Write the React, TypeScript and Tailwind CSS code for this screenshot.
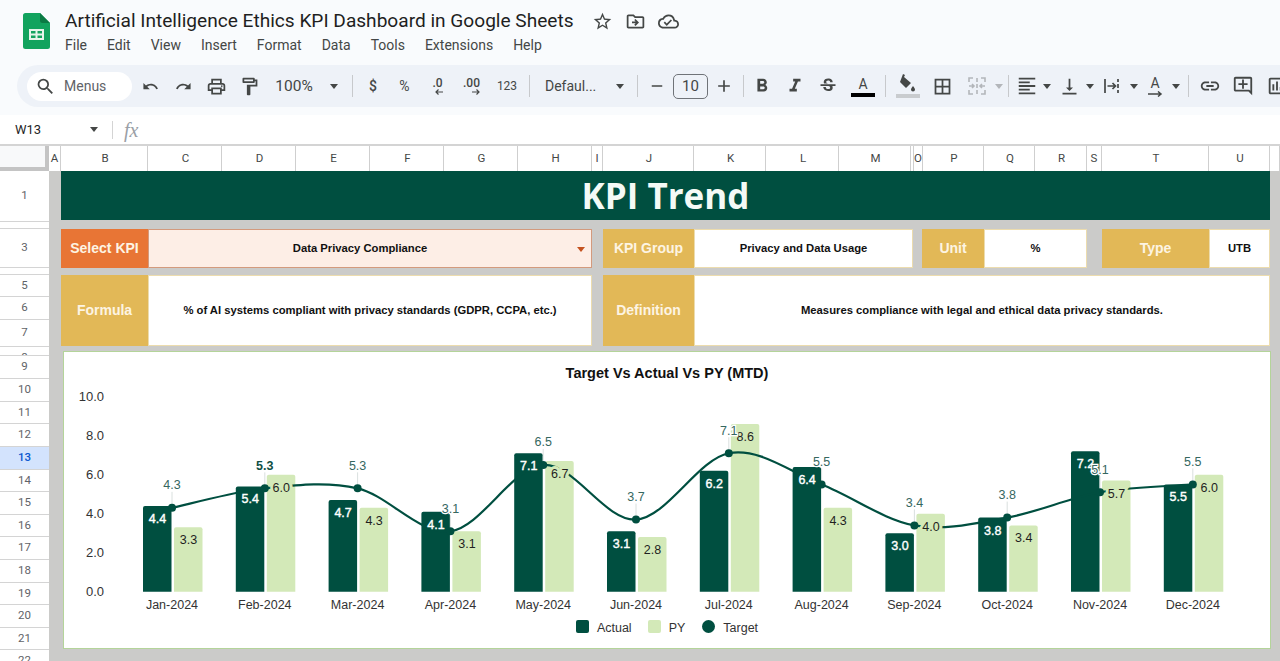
import {
  MdStarBorder,
  MdOutlineDriveFileMove,
  MdOutlineCloudDone,
  MdSearch,
  MdUndo,
  MdRedo,
  MdOutlinePrint,
  MdOutlineFormatPaint,
  MdFormatBold,
  MdFormatItalic,
  MdStrikethroughS,
  MdBorderAll,
  MdFormatAlignLeft,
  MdVerticalAlignBottom,
  MdLink,
  MdOutlineAddComment,
  MdOutlineInsertChart,
  MdAdd,
  MdRemove,
} from "react-icons/md";
import type { ReactNode } from "react";

const months = ["Jan", "Feb", "Mar", "Apr", "May", "Jun", "Jul", "Aug", "Sep", "Oct", "Nov", "Dec"];
const actual = [4.4, 5.4, 4.7, 4.1, 7.1, 3.1, 6.2, 6.4, 3.0, 3.8, 7.2, 5.5];
const py = [3.3, 6.0, 4.3, 3.1, 6.7, 2.8, 8.6, 4.3, 4.0, 3.4, 5.7, 6.0];
const target = [4.3, 5.3, 5.3, 3.1, 6.5, 3.7, 7.1, 5.5, 3.4, 3.8, 5.1, 5.5];

const columns: [string, number][] = [
  ["A", 12], ["B", 87], ["C", 74], ["D", 74], ["E", 74], ["F", 74], ["G", 74], ["H", 74], ["I", 11],
  ["J", 91], ["K", 72], ["L", 73], ["M", 72], ["", 3], ["O", 9], ["P", 61], ["Q", 51], ["R", 52],
  ["S", 15], ["T", 107], ["U", 61], ["", 10],
];

const rows: [string, number][] = [
  ["1", 51], ["2", 7], ["3", 39], ["4", 7], ["5", 22], ["6", 23], ["7", 27], ["8", 9], ["9", 23], ["10", 23],
  ["11", 22], ["12", 23], ["13", 23], ["14", 22], ["15", 23], ["16", 22], ["17", 23], ["18", 23], ["19", 22],
  ["20", 23], ["21", 22], ["22", 23],
];

const baseY = 591.7;
const unit = 19.5;
const xAt = (i: number) => 172 + i * 92.8;
const yAt = (v: number) => baseY - v * unit;

function smoothLine() {
  const pts = target.map((v, i) => ({ x: xAt(i), y: yAt(v) }));
  let d = `M${pts[0].x} ${pts[0].y}`;
  for (let i = 0; i < pts.length - 1; i++) {
    const p0 = pts[i - 1] ?? pts[i];
    const p1 = pts[i];
    const p2 = pts[i + 1];
    const p3 = pts[i + 2] ?? p2;
    const c1x = p1.x + (p2.x - p0.x) / 6;
    const c1y = p1.y + (p2.y - p0.y) / 6;
    const c2x = p2.x - (p3.x - p1.x) / 6;
    const c2y = p2.y - (p3.y - p1.y) / 6;
    d += ` C${c1x} ${c1y} ${c2x} ${c2y} ${p2.x} ${p2.y}`;
  }
  return d;
}

const Cell = ({ w, children }: { w: string; children: ReactNode }) => (
  <div className={`${w} flex h-full shrink-0 items-center justify-center text-[#444746]`}>{children}</div>
);

const Sep = ({ className = "mx-[6px]" }: { className?: string }) => (
  <div className={`${className} h-[22px] w-px shrink-0 bg-[#c7c9cc]`} />
);

const Caret = ({ color = "border-t-[#444746]" }: { color?: string }) => (
  <div className={`h-0 w-0 border-x-[4.5px] border-t-[5px] border-x-transparent ${color}`} />
);

const SheetsLogo = () => (
  <svg width="27" height="36" viewBox="0 0 27 36">
    <path d="M2.5 0H17l10 10v23.5a2.5 2.5 0 0 1-2.5 2.5h-22A2.5 2.5 0 0 1 0 33.5v-31A2.5 2.5 0 0 1 2.5 0z" fill="#12a35e" />
    <path d="M17 0l10 10h-7.5A2.5 2.5 0 0 1 17 7.5z" fill="#0b7a44" />
    <path d="M6 16h15v11H6zm2 2v2.5h4.500V18zm6.500 0v2.5H19V18zM8 22.5V25h4.500v-2.500zm6.500 0V25H19v-2.500z" fill="#e6f4ea" fillRule="evenodd" />
  </svg>
);

const Decimal = ({ text, dir }: { text: string; dir: "left" | "right" }) => (
  <div className="flex flex-col items-end">
    <span className="text-[12px] font-medium leading-[12px]">{text}</span>
    <svg width="8" height="6" viewBox="0 0 8 6" fill="none" stroke="#444746" strokeWidth="1.200">
      <path d={dir === "left" ? "M8 3H1M3.500.5L1 3l2.500 2.500" : "M0 3h7M4.500.5L7 3 4.500 5.500"} />
    </svg>
  </div>
);

const Toolbar = () => (
  <div className="ml-[17px] flex h-[42px] items-center rounded-l-[21px] bg-[#eef2f8] pl-[10px] text-[#444746]">
    <div className="flex h-[29px] w-[105px] shrink-0 items-center rounded-full bg-white pl-[8px]">
      <MdSearch size={21} className="text-[#444746]" />
      <span className="ml-[8px] text-[14px] text-[#5f6368]">Menus</span>
    </div>
    <div className="w-[2px] shrink-0" />
    <Cell w="w-[33px]"><MdUndo size={17} /></Cell>
    <Cell w="w-[33px]"><MdRedo size={17} /></Cell>
    <Cell w="w-[33px]"><MdOutlinePrint size={21} /></Cell>
    <Cell w="w-[33px]"><MdOutlineFormatPaint size={21} /></Cell>
    <Cell w="w-[56px]"><span className="pt-[2px] text-[15.5px]">100%</span></Cell>
    <Cell w="w-[24px]"><Caret /></Cell>
    <Sep className="ml-[6px] mr-[5px]" />
    <Cell w="w-[30px]"><span className="text-[14px] font-medium">$</span></Cell>
    <Cell w="w-[33px]"><span className="text-[14px]">%</span></Cell>
    <Cell w="w-[33px]"><Decimal text=".0" dir="left" /></Cell>
    <Cell w="w-[35px]"><Decimal text=".00" dir="right" /></Cell>
    <Cell w="w-[36px]"><span className="text-[12px]">123</span></Cell>
    <Sep className="ml-[4px] mr-[15px]" />
    <span className="w-[65px] shrink-0 text-[14px]">Defaul...</span>
    <Cell w="w-[20px]"><Caret /></Cell>
    <Sep className="ml-[7px] mr-[6px]" />
    <Cell w="w-[26px]"><MdRemove size={18} /></Cell>
    <div className="mx-[3px] flex h-[25px] w-[35px] shrink-0 items-center justify-center rounded-[5px] border border-[#6f7378] text-[15px]">10</div>
    <Cell w="w-[26px]"><MdAdd size={20} /></Cell>
    <Sep className="ml-[6px] mr-[1px]" />
    <Cell w="w-[33px]"><MdFormatBold size={22} /></Cell>
    <Cell w="w-[33px]"><MdFormatItalic size={22} /></Cell>
    <Cell w="w-[34px]"><MdStrikethroughS size={20} /></Cell>
    <Cell w="w-[36px]">
      <div className="flex flex-col items-center">
        <span className="text-[14px] leading-[17px]">A</span>
        <div className="h-[4px] w-[24px] bg-black" />
      </div>
    </Cell>
    <Sep className="ml-[4px] mr-[5px]" />
    <Cell w="w-[33px]">
      <div className="flex flex-col items-center">
        <svg width="20" height="20" viewBox="0 0 20 20">
          <path d="M5 0l2 1-1 2 7 6-5 5-6-6zM15 12c1.500 2 2 2.800 2 3.500a2 2 0 0 1-4 0c0-.7.500-1.500 2-3.500z" fill="#444746" />
        </svg>
        <div className="h-[4px] w-[24px] bg-[#c9cccf]" />
      </div>
    </Cell>
    <Cell w="w-[36px]"><MdBorderAll size={21} /></Cell>
    <Cell w="w-[34px]">
      <svg width="20" height="20" viewBox="0 0 20 20" fill="none" stroke="#b3b6ba" strokeWidth="1.600">
        <path d="M2 6V2h4M18 6V2h-4M2 14v4h4M18 14v4h-4M2 10h5M5 8l2 2-2 2M18 10h-5M15 8l-2 2 2 2M10 2v4M10 8v4M10 14v4" />
      </svg>
    </Cell>
    <Cell w="w-[9px]"><Caret color="border-t-[#b3b6ba]" /></Cell>
    <Sep className="ml-[5px] mr-[4px]" />
    <Cell w="w-[28px]"><MdFormatAlignLeft size={22} /></Cell>
    <Cell w="w-[12px]"><Caret /></Cell>
    <Cell w="w-[32px]"><MdVerticalAlignBottom size={21} /></Cell>
    <Cell w="w-[10px]"><Caret /></Cell>
    <Cell w="w-[34px]">
      <svg width="18" height="18" viewBox="0 0 18 18" fill="none" stroke="#444746" strokeWidth="1.700">
        <path d="M2 2v14M15 2v3M15 7v4M15 13v3M4.500 9h7.500M9.500 6l3 3-3 3" />
      </svg>
    </Cell>
    <Cell w="w-[10px]"><Caret /></Cell>
    <Cell w="w-[32px]">
      <div className="flex flex-col items-center">
        <span className="text-[14px] leading-[15px]">A</span>
        <svg width="16" height="6" viewBox="0 0 16 6" fill="none" stroke="#444746" strokeWidth="1.500">
          <path d="M1 3h13M11 .5L14 3l-3 2.500" />
        </svg>
      </div>
    </Cell>
    <Cell w="w-[10px]"><Caret /></Cell>
    <Sep className="ml-[7px] mr-[4px]" />
    <Cell w="w-[33px]"><MdLink size={22} /></Cell>
    <Cell w="w-[34px]"><MdOutlineAddComment size={22} /></Cell>
    <Cell w="w-[33px]"><MdOutlineInsertChart size={22} /></Cell>
  </div>
);

const Label = ({ w, bg = "bg-[#e2b857]", children }: { w: string; bg?: string; children: ReactNode }) => (
  <div className={`${w} ${bg} flex shrink-0 items-center justify-center font-['Liberation_Sans',sans-serif] text-[14px] font-bold text-[#fdf4e3]`}>
    {children}
  </div>
);

const Value = ({ w, children }: { w: string; children: ReactNode }) => (
  <div className={`${w} flex shrink-0 items-center justify-center border border-[#ecdcae] bg-white font-['Liberation_Sans',sans-serif] text-[11.25px] font-bold text-[#111]`}>
    {children}
  </div>
);

const Chart = () => (
  <svg width="1206" height="227" viewBox="64 385 1206 227" className="block font-['Liberation_Sans',sans-serif]">
    {[0, 2, 4, 6, 8, 10].map((v) => (
      <text key={v} x="104" y={yAt(v) + 4.5} textAnchor="end" className="fill-[#333] text-[13px]">
        {v.toFixed(1)}
      </text>
    ))}
    {months.map((m, i) => (
      <g key={m}>
        <path
          d={`M${xAt(i) - 29} ${baseY}v${-actual[i] * unit + 2}q0-2 2-2h24.5q2 0 2 2v${actual[i] * unit - 2}z`}
          fill="#004f40"
        />
        <path
          d={`M${xAt(i) + 2} ${baseY}v${-py[i] * unit + 2}q0-2 2-2h24.5q2 0 2 2v${py[i] * unit - 2}z`}
          fill="#d3e9b8"
        />
        <text x={xAt(i)} y="609" textAnchor="middle" className="fill-[#333] text-[12.5px]">
          {m}-2024
        </text>
      </g>
    ))}
    <path d={smoothLine()} fill="none" stroke="#004f40" strokeWidth="2.2" />
    {target.map((v, i) => (
      <g key={i}>
        <line x1={xAt(i)} x2={xAt(i)} y1={yAt(v) - 16} y2={yAt(v)} stroke="#cfd8d5" strokeWidth="0.8" />
        <circle cx={xAt(i)} cy={yAt(v)} r="4" fill="#004f40" />
      </g>
    ))}
    {months.map((m, i) => (
      <g key={m} textAnchor="middle" className="text-[12.5px]">
        <text x={xAt(i) - 14.5} y={yAt(actual[i]) + 17} stroke="#fff" strokeWidth="0.4" className="fill-white">
          {actual[i].toFixed(1)}
        </text>
        <text
          x={xAt(i) + 16.5}
          y={yAt(py[i]) + 17}
          stroke="#d3e9b8"
          strokeWidth="6"
          className="fill-[#1f1f1f]"
          style={{ paintOrder: "stroke" }}
        >
          {py[i].toFixed(1)}
        </text>
        <text
          x={xAt(i)}
          y={yAt(target[i]) - 18.5}
          stroke="#fff"
          strokeWidth="2.5"
          className={i === 1 ? "fill-[#0e4f44] font-bold" : "fill-[#35675f]"}
          style={{ paintOrder: "stroke" }}
        >
          {target[i].toFixed(1)}
        </text>
      </g>
    ))}
  </svg>
);

export default function App() {
  return (
    <div className="flex h-[661px] w-[1280px] flex-col overflow-hidden bg-white font-['Roboto',sans-serif]">
      {/* title + toolbar */}
      <div className="h-[115px] shrink-0 bg-[#f9fbfd]">
        <div className="flex h-[65px] items-start">
          <div className="ml-[23px] mt-[13px] shrink-0">
            <SheetsLogo />
          </div>
          <div className="ml-[15px] mt-[8px]">
            <div className="flex h-[26px] items-center">
              <span className="w-[527px] whitespace-nowrap text-[19.1px] text-[#1f1f1f]">
                Artificial Intelligence Ethics KPI Dashboard in Google Sheets
              </span>
              <div className="flex items-center gap-[12px] text-[#444746]">
                <MdStarBorder size={21} />
                <MdOutlineDriveFileMove size={21} />
                <MdOutlineCloudDone size={21} />
              </div>
            </div>
            <div className="mt-[1px] flex gap-[20px] text-[14px] text-[#444746]">
              {["File", "Edit", "View", "Insert", "Format", "Data", "Tools", "Extensions", "Help"].map((m) => (
                <span key={m}>{m}</span>
              ))}
            </div>
          </div>
        </div>
        <Toolbar />
      </div>

      {/* name box + formula bar */}
      <div className="flex h-[31px] shrink-0 items-center border-b-2 border-[#d4d4d4] bg-white">
        <span className="ml-[15px] w-[75px] text-[13px] text-[#1f1f1f]">W13</span>
        <Caret />
        <div className="ml-[14px] h-[18px] w-px bg-[#d4d4d4]" />
        <span className="ml-[11px] font-['Liberation_Serif',serif] text-[20px] italic text-[#9aa0a6]">fx</span>
      </div>

      {/* column letters */}
      <div className="flex h-[25px] shrink-0 bg-white">
        <div className="w-[49px] shrink-0 border-b-[4px] border-r-[4px] border-[#c4c4c4] bg-[#f8f9fa]" />
        {columns.map(([c, w], i) => (
          <div
            key={i}
            className={`flex shrink-0 items-center justify-center border-r border-[#cfcfcf] text-[11.5px] text-[#444746] ${w > 20 ? "pl-[2px]" : ""}`}
            style={{ width: w }}
          >
            {c}
          </div>
        ))}
      </div>

      <div className="flex min-h-0 flex-1">
        {/* row numbers */}
        <div className="w-[49px] shrink-0 overflow-hidden bg-white">
          {rows.map(([r, h], i) => (
            <div
              key={i}
              className={`flex justify-center overflow-hidden border-b border-[#d4d4d4] text-[11.5px] ${h < 10 ? "items-start pt-[3px] leading-[14px]" : "items-center"} ${r === "13" ? "bg-[#d3e3fd] font-medium text-[#0b57d0]" : "text-[#5f6368]"}`}
              style={{ height: h }}
            >
              {r}
            </div>
          ))}
        </div>

        {/* sheet */}
        <div className="flex min-w-0 flex-1 flex-col bg-[#cbcbc9] pl-[12px] pr-[10px] font-['Liberation_Sans',sans-serif]">
          <div className="flex h-[49px] shrink-0 items-center justify-center bg-[#004f40] pt-[1px] font-['Open_Sans',sans-serif] text-[35px] font-bold text-[#f4faf6]">
            KPI Trend
          </div>

          <div className="mt-[9px] flex h-[39px] shrink-0">
            <Label w="w-[87px]" bg="bg-[#e87535]">Select KPI</Label>
            <div className="relative flex w-[444px] shrink-0 items-center justify-center border border-[#d39a7d] bg-[#fdeee6] pr-[20px] text-[11.25px] font-bold text-[#111]">
              Data Privacy Compliance
              <div className="absolute right-[6px] top-[17px]">
                <Caret color="border-t-[#c4521f]" />
              </div>
            </div>
            <div className="w-[11px] shrink-0" />
            <Label w="w-[91px]">KPI Group</Label>
            <Value w="w-[219px]">Privacy and Data Usage</Value>
            <div className="w-[9px] shrink-0" />
            <Label w="w-[62px]">Unit</Label>
            <Value w="w-[103px]">%</Value>
            <div className="w-[15px] shrink-0" />
            <Label w="w-[107px]">Type</Label>
            <Value w="w-[61px]">UTB</Value>
          </div>

          <div className="mt-[7px] flex h-[71px] shrink-0">
            <Label w="w-[87px]">Formula</Label>
            <Value w="w-[444px]">% of AI systems compliant with privacy standards (GDPR, CCPA, etc.)</Value>
            <div className="w-[11px] shrink-0" />
            <Label w="w-[91px]">Definition</Label>
            <Value w="w-[576px]">Measures compliance with legal and ethical data privacy standards.</Value>
          </div>

          <div className="ml-[2px] mr-[-1px] mt-[5px] flex h-[298px] shrink-0 flex-col border border-[#b4d49a] bg-white">
            <div className="flex h-[33px] shrink-0 items-end justify-center text-[14.5px] font-bold text-[#111]">
              Target Vs Actual Vs PY (MTD)
            </div>
            <Chart />
            <div className="flex flex-1 items-start justify-center pt-[7px] text-[12.5px] text-[#333]">
              <div className="h-[13px] w-[13px] translate-y-[1px] rounded-[2px] bg-[#004f40]" />
              <span className="ml-[8px]">Actual</span>
              <div className="ml-[16px] h-[13px] w-[13px] translate-y-[1px] rounded-[2px] bg-[#d3e9b8]" />
              <span className="ml-[8px]">PY</span>
              <div className="ml-[17px] h-[13px] w-[13px] translate-y-[1px] rounded-full bg-[#004f40]" />
              <span className="ml-[8px]">Target</span>
            </div>
          </div>
        </div>
      </div>
    </div>
  );
}
